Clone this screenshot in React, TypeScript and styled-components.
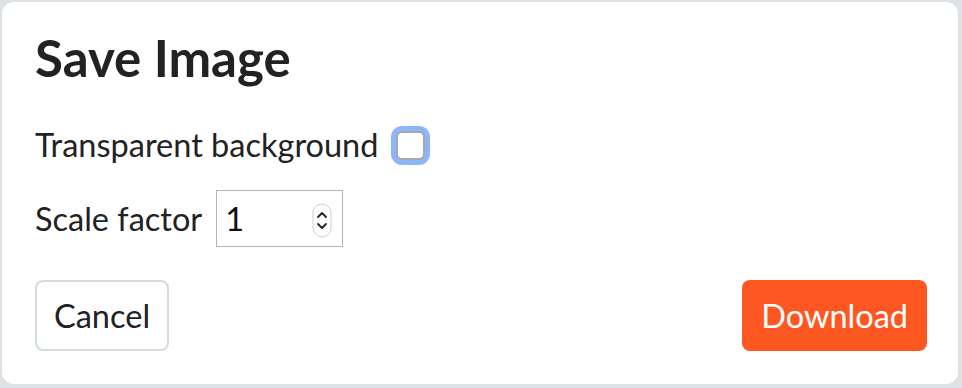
import React from "react";
import styled, { createGlobalStyle } from "styled-components";

const Global = createGlobalStyle`
  html, body { margin: 0; padding: 0; background: #dce2e5; }
  body { font-family: Lato, "Open Sans", sans-serif; color: #222; }
  #root { padding: 2px 4px 4px 2px; }
`;

const Dialog = styled.div`
  box-sizing: border-box;
  height: 382px;
  background: #fff;
  border-radius: 12px;
  padding: 26px 31px 33px 33px;
  display: flex;
  flex-direction: column;
`;

const Title = styled.h1`
  margin: 0;
  font-size: 51px;
  font-weight: 700;
  line-height: 60px;
  color: #222;
`;

const Row = styled.div<{ $top: number; $h: number }>`
  display: flex;
  align-items: center;
  gap: 12px;
  height: ${(p) => p.$h}px;
  margin-top: ${(p) => p.$top}px;
  font-size: 32.5px;
  line-height: 38px;
  color: #222;
`;

const Check = styled.span`
  box-sizing: border-box;
  width: 29px;
  height: 29px;
  border: 2px solid #a8a8a8;
  border-radius: 6px;
  background: #fff;
  box-shadow: 0 0 0 5px #8db5fa;
  margin-left: 6px;
`;

const NumberBox = styled.div`
  box-sizing: border-box;
  position: relative;
  width: 127px;
  height: 57px;
  border: 1px solid #b5b5b5;
  display: flex;
  align-items: center;
  padding-left: 8px;
  font-size: 32.5px;
  color: #111;
  margin-left: 2px;
`;

const Spinner = styled.svg`
  position: absolute;
  right: 10px;
  top: 12px;
`;

const Footer = styled.div`
  margin-top: auto;
  display: flex;
  justify-content: space-between;
  align-items: center;
`;

const Button = styled.button<{ $primary?: boolean }>`
  box-sizing: border-box;
  height: 71px;
  padding: 0 ${(p) => (p.$primary ? 19 : 17)}px;
  border-radius: 8px;
  font-family: Lato, "Open Sans", sans-serif;
  font-size: 32.5px;
  border: ${(p) => (p.$primary ? "none" : "2px solid #d3dde1")};
  background: ${(p) => (p.$primary ? "#ff5722" : "#fff")};
  color: ${(p) => (p.$primary ? "#fff" : "#222")};
`;

export default function App() {
  return (
    <>
      <Global />
      <Dialog>
        <Title>Save Image</Title>
        <Row $top={37} $h={40}>
          <span>Transparent background</span>
          <Check />
        </Row>
        <Row $top={25} $h={57}>
          <span>Scale factor</span>
          <NumberBox>
            1
            <Spinner width="20" height="35" viewBox="0 0 20 35">
              <rect x="1" y="1" width="18" height="33" rx="9" fill="#fff" stroke="#cfcfcf" />
              <path d="M6 14 L10 10 L14 14" fill="none" stroke="#222" strokeWidth="1.8" strokeLinecap="round" strokeLinejoin="round" />
              <path d="M6 21 L10 25 L14 21" fill="none" stroke="#222" strokeWidth="1.8" strokeLinecap="round" strokeLinejoin="round" />
            </Spinner>
          </NumberBox>
        </Row>
        <Footer>
          <Button>Cancel</Button>
          <Button $primary>Download</Button>
        </Footer>
      </Dialog>
    </>
  );
}
